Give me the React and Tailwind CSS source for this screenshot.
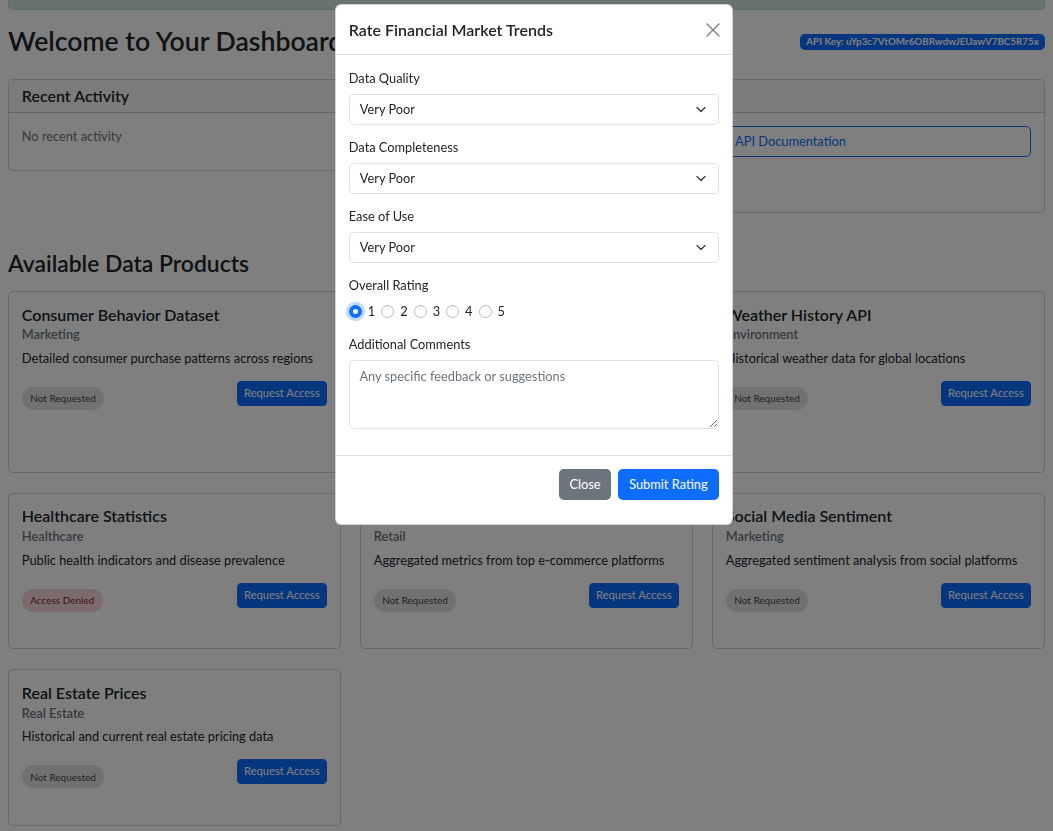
import React from "react";

const products = [
  { title: "Consumer Behavior Dataset", category: "Marketing", desc: "Detailed consumer purchase patterns across regions", status: "none" },
  { title: "Financial Market Trends", category: "Finance", desc: "Real-time and historical stock market indicators", status: "granted", rated: true },
  { title: "Weather History API", category: "Environment", desc: "Historical weather data for global locations", status: "none" },
  { title: "Healthcare Statistics", category: "Healthcare", desc: "Public health indicators and disease prevalence", status: "denied" },
  { title: "E-commerce Analytics", category: "Retail", desc: "Aggregated metrics from top e-commerce platforms", status: "none" },
  { title: "Social Media Sentiment", category: "Marketing", desc: "Aggregated sentiment analysis from social platforms", status: "none" },
  { title: "Real Estate Prices", category: "Real Estate", desc: "Historical and current real estate pricing data", status: "none" },
];

function StatusBadge({ status }) {
  if (status === "denied") {
    return (
      <span className="inline-flex h-[23px] items-center rounded-full bg-[#f8d7da] px-[8.4px] text-[10px] leading-none text-[#842029]">
        Access Denied
      </span>
    );
  }
  if (status === "granted") {
    return (
      <span className="inline-flex h-[23px] items-center rounded-full bg-[#d1e7dd] px-[8.4px] text-[10px] leading-none text-[#0f5132]">
        Access Granted
      </span>
    );
  }
  return (
    <span className="inline-flex h-[23px] items-center rounded-full bg-[#e2e3e5] px-[8.4px] text-[10px] leading-none text-[#41464b]">
      Not Requested
    </span>
  );
}

function ProductCard({ p }) {
  return (
    <div className="flex flex-col rounded-[5px] border border-black/[.175] bg-white p-[12.8px]">
      <h5 className="mb-[6.4px] text-[16px] font-semibold leading-[1.2]">{p.title}</h5>
      <h6 className="mb-[6.4px] mt-[-3.2px] text-[12.8px] font-semibold leading-[1.2] text-[#6c757d]">{p.category}</h6>
      <p className="mb-[12.8px]">{p.desc}</p>
      <div className="flex items-start justify-between">
        <div className="pb-[24px] pt-[6px]">
          <StatusBadge status={p.status} />
        </div>
        <button className="h-[25px] rounded-[4px] border border-[#0d6efd] bg-[#0d6efd] px-[6.4px] text-[11.2px] leading-[1.5] text-white">
          Request Access
        </button>
      </div>
      {p.rated && (
        <button className="h-[25px] w-fit rounded-[4px] border border-[#ffc107] px-[6.4px] text-[11.2px] text-[#997404]">
          Rate Product
        </button>
      )}
    </div>
  );
}

function SelectBox() {
  return (
    <div className="flex h-[31px] items-center justify-between rounded-[4.8px] border border-[#dee2e6] bg-white pl-[10px] pr-[12px]">
      <span>Very Poor</span>
      <svg width="10" height="7" viewBox="0 0 10 7" fill="none" stroke="#343a40" strokeWidth="1.3" strokeLinecap="round" strokeLinejoin="round">
        <path d="M1 1.5 5 5.5 9 1.5" />
      </svg>
    </div>
  );
}

function Radio({ n, checked }) {
  return (
    <label className="mr-[6px] flex items-center">
      {checked ? (
        <span className="flex h-[13px] w-[13px] items-center justify-center rounded-full bg-[#0d6efd] shadow-[0_0_0_3.2px_rgba(13,110,253,0.25)]">
          <span className="h-[5px] w-[5px] rounded-full bg-white" />
        </span>
      ) : (
        <span className="h-[13px] w-[13px] rounded-full border border-black/25 bg-white" />
      )}
      <span className="ml-[6px]">{n}</span>
    </label>
  );
}

export default function App() {
  return (
    <div className="relative min-h-screen bg-white font-['Segoe_UI',Lato,sans-serif] text-[12.8px] leading-[1.5] text-[#212529]">
      <div className="px-[8px] pb-[20px]">
        <div className="h-[10px] rounded-b-[5px] border border-t-0 border-[#badbcc] bg-[#d1e7dd]" />

        <div className="mt-[16px] flex items-center justify-between">
          <h2 className="text-[26.6px] font-semibold leading-[1.2]">Welcome to Your Dashboard</h2>
          <span className="rounded-[4.8px] bg-[#0d6efd] px-[6.2px] py-[3.4px] text-[9.8px] font-bold leading-none text-white">
            API Key: uYp3c7VtOMr6OBRwdwJEUawV7BC5R75x
          </span>
        </div>

        <div className="mt-[21px] grid grid-cols-2 items-start gap-[19px]">
          <div className="rounded-[5px] border border-black/[.175] bg-white">
            <div className="border-b border-black/[.175] bg-[#f7f7f7] px-[12.8px] py-[6.4px]">
              <h5 className="text-[16px] font-semibold leading-[1.2]">Recent Activity</h5>
            </div>
            <div className="px-[12.8px] pb-[12.8px] pt-[14px]">
              <p className="mb-[11.6px] text-[#6c757d]">No recent activity</p>
            </div>
          </div>
          <div className="rounded-[5px] border border-black/[.175] bg-white">
            <div className="border-b border-black/[.175] bg-[#f7f7f7] px-[12.8px] py-[6.4px]">
              <h5 className="text-[16px] font-semibold leading-[1.2]">Quick Links</h5>
            </div>
            <div className="flex flex-col p-[12.8px]">
              <button className="h-[31px] w-full rounded-[4.8px] border border-[#0d6efd] px-[9.6px] pt-[1px] text-[#0d6efd]">
                API Documentation
              </button>
              <button className="mt-[12px] h-[31px] w-fit rounded-[4.8px] border border-[#6c757d] px-[9.6px] text-[#6c757d]">
                Support
              </button>
            </div>
          </div>
        </div>

        <h3 className="mt-[37px] text-[22.9px] font-semibold leading-[1.2]">Available Data Products</h3>

        <div className="mt-[13px] grid grid-cols-3 gap-x-[19px] gap-y-[20px]">
          {products.map((p) => (
            <ProductCard key={p.title} p={p} />
          ))}
        </div>
      </div>

      <div className="fixed inset-0 bg-black/50" />

      <div className="fixed left-[335px] top-[4px] w-[398px] rounded-[6.4px] border border-black/[.175] bg-white">
        <div className="flex items-center justify-between border-b border-[#dee2e6] px-[12.8px] py-[12.5px]">
          <h5 className="text-[16px] font-semibold leading-[1.5]">Rate Financial Market Trends</h5>
          <button className="mr-[-1px] flex h-[14px] w-[14px] items-center justify-center text-black/50">
            <svg width="14" height="14" viewBox="0 0 14 14" stroke="currentColor" strokeWidth="1.4" strokeLinecap="round">
              <path d="M1 1 13 13M13 1 1 13" />
            </svg>
          </button>
        </div>

        <div className="px-[12.8px] pb-[12.8px] pt-[13.5px]">
          <label className="mb-[6px] block">Data Quality</label>
          <SelectBox />
          <label className="mb-[6px] mt-[13px] block">Data Completeness</label>
          <SelectBox />
          <label className="mb-[6px] mt-[13px] block">Ease of Use</label>
          <SelectBox />
          <label className="mb-[6.4px] mt-[13px] block">Overall Rating</label>
          <div className="flex items-center">
            <Radio n="1" checked />
            <Radio n="2" />
            <Radio n="3" />
            <Radio n="4" />
            <Radio n="5" />
          </div>
          <label className="mb-[6.4px] mt-[14px] block">Additional Comments</label>
          <textarea
            rows={3}
            placeholder="Any specific feedback or suggestions"
            className="mb-[12.8px] block h-[69px] w-full rounded-[4.8px] border border-[#dee2e6] px-[9.6px] pb-[4.8px] pt-[6px] leading-[1.5] placeholder-[#6c757d] outline-none"
          />
        </div>

        <div className="flex justify-end gap-[6.4px] border-t border-[#dee2e6] px-[12.8px] pb-[24px] pt-[13px]">
          <button className="h-[31px] rounded-[4.8px] bg-[#6c757d] px-[10.6px] text-white">Close</button>
          <button className="h-[31px] rounded-[4.8px] bg-[#0d6efd] px-[11.6px] text-white">Submit Rating</button>
        </div>
      </div>
    </div>
  );
}
